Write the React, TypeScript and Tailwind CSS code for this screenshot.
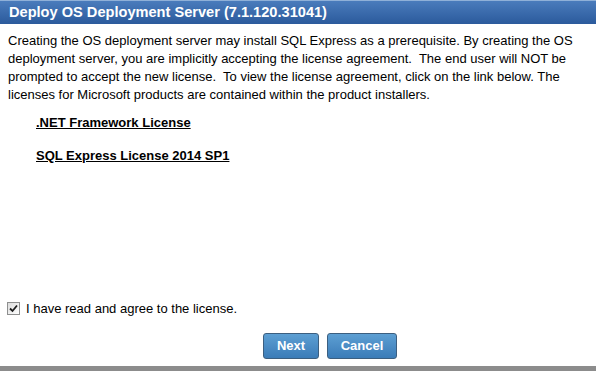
import React, { useState } from "react"

const LINKS = [".NET Framework License", "SQL Express License 2014 SP1"]

export default function App() {
  const [agreed, setAgreed] = useState(true)

  return (
    <div className="w-[596px] h-[371px] bg-white flex flex-col overflow-hidden font-['Liberation_Sans',Arial,sans-serif] text-black">
      {/* Title bar */}
      <div className="h-[24px] border-t border-[#8fb0d8] bg-gradient-to-b from-[#4a7cbc] to-[#2b5a9c] flex items-center pl-[9px]">
        <span className="text-[14.6px] font-bold text-white leading-none">Deploy OS Deployment Server (7.1.120.31041)</span>
      </div>

      {/* Body */}
      <div className="flex-1 flex flex-col">
        <p className="px-[8px] pt-[8px] text-[13px] leading-[18px]">
          Creating the OS deployment server may install SQL Express as a prerequisite. By creating the OS
          deployment server, you are implicitly accepting the license agreement.&nbsp; The end user will NOT be
          prompted to accept the new license.&nbsp; To view the license agreement, click on the link below. The
          licenses for Microsoft products are contained within the product installers.
        </p>

        <div className="pl-[36px] pt-[11px] flex flex-col gap-[18px]">
          {LINKS.map((label) => (
            <a key={label} href="#" className="text-[13px] font-bold underline leading-[15px] text-black">
              {label}
            </a>
          ))}
        </div>

        <div className="flex-1" />

        <label className="flex items-center gap-[6px] pl-[7px] text-[13px]">
          <span
            onClick={() => setAgreed(!agreed)}
            className="w-[13px] h-[13px] border border-[#8e8f8f] bg-gradient-to-br from-[#dcdcdc] to-white flex items-center justify-center"
          >
            {agreed && (
              <svg width="9" height="9" viewBox="0 0 9 9">
                <path d="M1 4.5 L3.5 7 L8 1.5" stroke="#1c1c1c" strokeWidth="1.8" fill="none" />
              </svg>
            )}
          </span>
          I have read and agree to the license.
        </label>

        <div className="flex justify-center gap-[8px] pt-[15px] pb-[7px] pl-[64px]">
          <button className="w-[56px] h-[26px] rounded-[3px] border border-[#3c5f80] bg-gradient-to-b from-[#5d9fd3] to-[#3b7cb8] text-white text-[13px] font-bold">
            Next
          </button>
          <button className="w-[70px] h-[26px] rounded-[3px] border border-[#3c5f80] bg-gradient-to-b from-[#5d9fd3] to-[#3b7cb8] text-white text-[13px] font-bold">
            Cancel
          </button>
        </div>
      </div>

      <div className="h-[5px] bg-[#8c8c8c]" />
    </div>
  )
}
